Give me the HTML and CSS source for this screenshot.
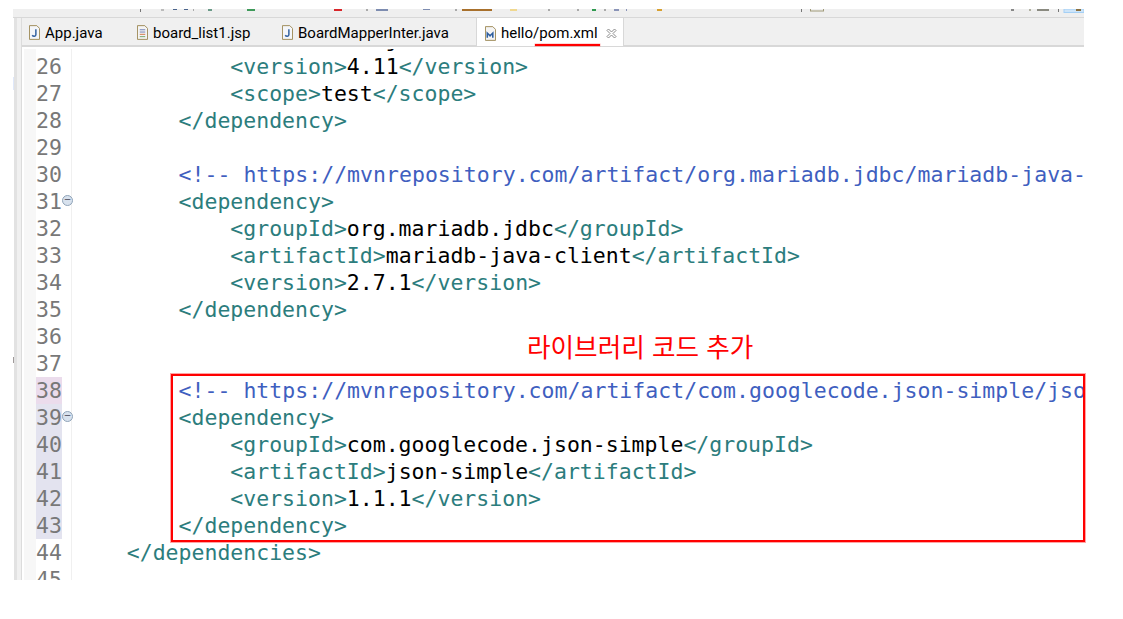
FILE: index.html
```html
<!DOCTYPE html>
<html lang="ko">
<head>
<meta charset="utf-8">
<title>hello/pom.xml</title>
<link rel="stylesheet" href="styles.css">
</head>
<body>
<div class="window">
  <div class="toolbar">
    <svg class="toolbar-icons" viewBox="0 0 1071 4" width="1071" height="4">
      <g transform="translate(-13 0)">
        <rect x="140" y="0" width="1" height="3" fill="#777"/><rect x="161" y="0" width="3" height="2" fill="#bbb"/><rect x="173" y="0" width="4" height="1" fill="#4a648c"/><rect x="184" y="0" width="4" height="1" fill="#4a648c"/><rect x="193" y="0" width="1" height="2" fill="#aaa"/><rect x="208" y="0" width="4" height="2" fill="#6a9a88"/>
        <rect x="247" y="0" width="8" height="2" fill="#3f9a5a"/><rect x="334" y="0" width="8" height="2" fill="#d8262a"/><rect x="366" y="0" width="2" height="2" fill="#aaa"/><rect x="376" y="0" width="12" height="2" fill="#7d8cb0"/><rect x="423" y="0" width="7" height="1" fill="#7d8cb0"/><rect x="455" y="0" width="2" height="2" fill="#aaa"/><rect x="462" y="0" width="24" height="2" fill="#a8702c"/>
        <rect x="486" y="0" width="6" height="2" fill="#a8702c"/><rect x="510" y="0" width="7" height="2" fill="#f0d890"/><rect x="548" y="0" width="2" height="2" fill="#aaa"/><rect x="577" y="0" width="2" height="2" fill="#aaa"/><rect x="592" y="0" width="4" height="2" fill="#2f9a50"/><rect x="604" y="0" width="2" height="2" fill="#aaa"/><rect x="614" y="0" width="5" height="2" fill="#8a94b8"/><rect x="626" y="0" width="1" height="2" fill="#8a94b8"/><rect x="657" y="0" width="5" height="2" fill="#d8a030"/>
        <rect x="801" y="0" width="1" height="3" fill="#777"/><rect x="810.500" y="-2" width="13" height="4" fill="none" stroke="#a09a78"/><rect x="1011" y="0" width="3" height="2" fill="#888"/><rect x="1029" y="0" width="2" height="2" fill="#b0b0a0"/><rect x="1037" y="0" width="12" height="2" fill="#8a8a80"/><rect x="1058" y="0" width="1" height="3" fill="#777"/>
        <rect x="1064" y="0" width="20" height="3.500" fill="#cde4f8" stroke="#a5d0f5"/><rect x="1076" y="0" width="5" height="2" fill="#8a7040"/>
      </g>
    </svg>
  </div>
  <div class="workspace">
    <div class="sidebar"><span class="speck speck-blue"></span><span class="speck speck-dark"></span></div>
    <div class="main">
      <div class="tabs">
        <div class="tab t1"><svg class="ico" viewBox="0 0 12 16"><path d="M.5.5h8l3 3v12H.5z" fill="#f4f6fa" stroke="#9a8650"/><path d="M7.500 4.500v6c0 2-3 2-4 .5" fill="none" stroke="#2f5f9f" stroke-width="1.600"/></svg>App.java</div>
        <div class="tab t2"><svg class="ico" viewBox="0 0 12 16"><path d="M.5.500h8l3 3v12H.5z" fill="#f4f4f4" stroke="#9a8650"/><path d="M3 5h6M3 7.500h6" stroke="#6a7ab0"/><path d="M3 10h6" stroke="#d07040"/><path d="M3 12.500h6" stroke="#70a060"/></svg>board_list1.jsp</div>
        <div class="tab t3"><svg class="ico" viewBox="0 0 12 16"><path d="M.5.5h8l3 3v12H.5z" fill="#f4f6fa" stroke="#9a8650"/><path d="M7.500 4.500v6c0 2-3 2-4 .5" fill="none" stroke="#2f5f9f" stroke-width="1.600"/></svg>BoardMapperInter.java</div>
        <div class="tab active"><svg class="ico" viewBox="0 0 12 16"><path d="M.5.5h8l3 3v12H.5z" fill="#f4f4f4" stroke="#9a8650"/><path d="M2.500 12.500V7.500l3 3 3-3v5" fill="none" stroke="#2f5f9f" stroke-width="1.700"/></svg><span class="tab-name">hello/pom.xml</span><svg class="close" viewBox="0 0 11 11"><path d="M1 2.500 2.500 1 5.500 4 8.500 1 10 2.500 7 5.500 10 8.500 8.500 10 5.500 7 2.500 10 1 8.500 4 5.500z" fill="#fff" stroke="#8a8a8a"/></svg></div>
      </div>
      <div class="editor">
        <div class="gutter">
          <div class="ln">26</div><div class="ln">27</div><div class="ln">28</div><div class="ln">29</div><div class="ln">30</div>
          <div class="ln fold">31</div><div class="ln">32</div><div class="ln">33</div><div class="ln">34</div><div class="ln">35</div>
          <div class="ln">36</div><div class="ln">37</div><div class="ln mark-a">38</div><div class="ln mark-b fold">39</div><div class="ln mark-b">40</div>
          <div class="ln mark-b">41</div><div class="ln mark-b">42</div><div class="ln mark-b">43</div><div class="ln">44</div><div class="ln">45</div>
        </div>
        <div class="code">
<div class="line first">            <span class="tag">&lt;artifactId&gt;</span>junit<span class="tag">&lt;/artifactId&gt;</span></div>
<div class="line">            <span class="tag">&lt;version&gt;</span>4.11<span class="tag">&lt;/version&gt;</span></div>
<div class="line">            <span class="tag">&lt;scope&gt;</span>test<span class="tag">&lt;/scope&gt;</span></div>
<div class="line">        <span class="tag">&lt;/dependency&gt;</span></div>
<div class="line"> </div>
<div class="line">        <span class="cm">&lt;!-- https://mvnrepository.com/artifact/org.mariadb.jdbc/mariadb-java-client --&gt;</span></div>
<div class="line">        <span class="tag">&lt;dependency&gt;</span></div>
<div class="line">            <span class="tag">&lt;groupId&gt;</span>org.mariadb.jdbc<span class="tag">&lt;/groupId&gt;</span></div>
<div class="line">            <span class="tag">&lt;artifactId&gt;</span>mariadb-java-client<span class="tag">&lt;/artifactId&gt;</span></div>
<div class="line">            <span class="tag">&lt;version&gt;</span>2.7.1<span class="tag">&lt;/version&gt;</span></div>
<div class="line">        <span class="tag">&lt;/dependency&gt;</span></div>
<div class="line"> </div>
<div class="line"> </div>
<div class="line">        <span class="cm">&lt;!-- https://mvnrepository.com/artifact/com.googlecode.json-simple/json-simple --&gt;</span></div>
<div class="line">        <span class="tag">&lt;dependency&gt;</span></div>
<div class="line">            <span class="tag">&lt;groupId&gt;</span>com.googlecode.json-simple<span class="tag">&lt;/groupId&gt;</span></div>
<div class="line">            <span class="tag">&lt;artifactId&gt;</span>json-simple<span class="tag">&lt;/artifactId&gt;</span></div>
<div class="line">            <span class="tag">&lt;version&gt;</span>1.1.1<span class="tag">&lt;/version&gt;</span></div>
<div class="line">        <span class="tag">&lt;/dependency&gt;</span></div>
<div class="line">    <span class="tag">&lt;/dependencies&gt;</span></div>
        </div>
      </div>
    </div>
  </div>
  <div class="tab-underline"></div>
  <div class="callout">라이브러리 코드 추가</div>
  <div class="highlight-box"></div>
</div>
</body>
</html>
```
FILE: styles.css
```css
* { box-sizing: border-box; }
html, body { margin: 0; padding: 0; background: #fff; }
body { width: 1123px; height: 619px; overflow: hidden; }
.window { position: relative; width: 1084px; height: 580px; padding-top: 9px; padding-left: 13px; display: flex; flex-direction: column; }
.toolbar { height: 9px; background: #efefef; border-bottom: 1px solid #d8d8d8; flex: none; }
.toolbar-icons { display: block; overflow: hidden; }
.workspace { flex: 1; display: flex; min-height: 0; }
.sidebar { position: relative; width: 9px; flex: none; background: linear-gradient(90deg, #fff 1px, #e2e2e2 1px, #e2e2e2 4px, #f0f0f0 4px, #f0f0f0 8px, #dcdcdc 8px); }
.speck { position: absolute; left: 0; width: 1px; }
.speck-blue { top: 59px; height: 13px; background: #dfe8fa; }
.speck-dark { top: 339px; height: 6px; background: #a09a9a; }
.main { flex: 1; display: flex; flex-direction: column; min-width: 0; }
.tabs { height: 29px; flex: none; display: flex; background: #f0f0f0; border-bottom: 2px solid #d8d8d8; font: 15px "Roboto", "Open Sans", sans-serif; color: #000; }
.tab { display: flex; align-items: center; height: 27px; padding-top: 2px; white-space: nowrap; }
.ico { width: 11px; height: 15px; margin-right: 5px; flex: none; }
.t1 { margin-left: 7px; width: 108px; }
.t2 { width: 145px; }
.t3 { width: 194px; }
.active { background: #fff; width: 148px; height: 28px; padding-left: 8px; border-left: 1px solid #d8d8d8; border-right: 1px solid #d8d8d8; }
.close { width: 11px; height: 11px; margin-left: 8px; }
.editor { flex: 1; display: flex; background: #fff; overflow: hidden; min-height: 0; }
.gutter { flex: none; width: 50px; margin-top: 2px; padding-left: 14px; padding-top: 4px; border-right: 1px solid #f0f0f0; font: 21.5px/27px "DejaVu Sans Mono", monospace; color: #787878; background: linear-gradient(90deg, #fff 2px, #f7f7f7 2px, #f7f7f7 14px, #fff 14px); }
.ln { width: 26px; height: 27px; position: relative; }
.mark-a { background: #ebdcec; }
.mark-b { background: #e3e3ef; }
.fold::after { content: "−"; position: absolute; left: 26px; top: 7px; width: 9px; height: 9px; border-radius: 50%; background: #d8e2ee; border: 1px solid #8fa3b8; font: 9px/7px "DejaVu Sans", sans-serif; text-align: center; color: #445; }
.code { flex: 1; min-width: 0; margin-top: 2px; font: 21.5px/27px "DejaVu Sans Mono", monospace; color: #000; overflow: hidden; }
.line { height: 27px; margin-left: 3px; white-space: pre; }
.first { margin-top: -23px; }
.tag { color: #2c7d7d; }
.cm { color: #3f5fbf; letter-spacing: .02px; }
.tab-underline { position: absolute; left: 535px; top: 44px; width: 65px; height: 2px; background: #f00; box-shadow: 0 0 0 .5px rgba(255, 0, 0, .3); }
.callout { position: absolute; left: 527px; top: 329px; font: 25.6px/34px "Noto Sans CJK KR", sans-serif; color: #f00; white-space: nowrap; }
.highlight-box { position: absolute; left: 171px; top: 374px; width: 914px; height: 168px; border: 2px solid #f00; box-shadow: 0 0 0 1px rgba(255, 90, 90, .55); }
```
